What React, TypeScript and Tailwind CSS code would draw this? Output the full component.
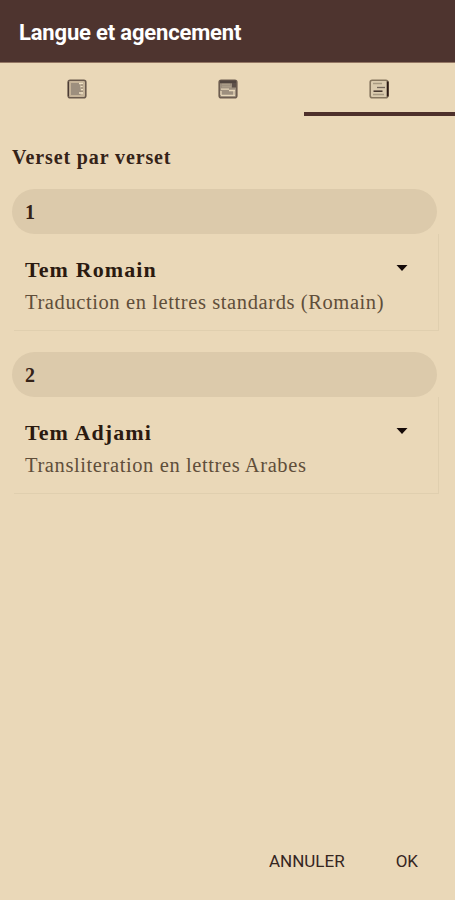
import type { ReactNode } from "react";

const entries = [
  {
    position: 1,
    title: "Tem Romain",
    description: "Traduction en lettres standards (Romain)",
  },
  {
    position: 2,
    title: "Tem Adjami",
    description: "Transliteration en lettres Arabes",
  },
];

function SinglePaneIcon() {
  return (
    <svg width="20" height="20" viewBox="0 0 20 20">
      <rect x="1.2" y="1.2" width="17.6" height="17.6" rx="2" fill="#c6b499" stroke="#6a5a4d" strokeWidth="1.6" />
      <path d="M1.5 3v14" stroke="#4b3b34" strokeWidth="1.2" />
      <path d="M4 4h9.5v12H4z" fill="#9d8f7e" />
      <path d="M12 4.5h4M13.5 7.5h2M14 10.5h2M12 14h4" stroke="#eee0c2" strokeWidth="1.4" />
      <path d="M14 6h2M14 9h2M13 12.2h3" stroke="#8b7c6b" />
    </svg>
  );
}

function TwoPaneIcon() {
  return (
    <svg width="20" height="20" viewBox="0 0 20 20">
      <rect x="1.2" y="1.2" width="17.6" height="17.6" rx="2" fill="#9d8f7e" stroke="#6d5d50" strokeWidth="1.6" />
      <path d="M2 1.5h16v2.8H2z" fill="#51453f" />
      <path d="M14 4h4v4.5h-4z" fill="#5d5049" />
      <path d="M4 5.5h8M4 7.8h9" stroke="#aa9c88" strokeWidth="1.4" />
      <path d="M3 10.2h8M11 11.5h6M3 12v4M16 12v4M3 16.3h14" stroke="#e8d8ba" strokeWidth="1.3" />
    </svg>
  );
}

function VerseByVerseIcon() {
  return (
    <svg width="20" height="20" viewBox="0 0 20 20">
      <rect x="1.2" y="1.2" width="17.6" height="17.6" rx="2" fill="#dbcbae" stroke="#86765f" strokeWidth="1.6" />
      <path d="M18.7 2.5v15" stroke="#2a1812" strokeWidth="2" />
      <path d="M4 4.5h9M4 15.5h11" stroke="#a89a82" strokeWidth="1.6" />
      <path d="M8 8.5h8" stroke="#74675a" strokeWidth="1.3" />
      <path d="M4.5 12.2h9" stroke="#42322a" strokeWidth="1.5" />
    </svg>
  );
}

function Tab({ children, active = false }: { children: ReactNode; active?: boolean }) {
  return (
    <button
      className={
        active
          ? "flex h-[53px] flex-1 items-start justify-center border-b-4 border-[#4e302b] pt-4"
          : "flex h-[53px] flex-1 items-start justify-center pt-4"
      }
    >
      {children}
    </button>
  );
}

function App() {
  return (
    <div className="flex h-[900px] w-[455px] flex-col bg-[#ead8b8] font-['Roboto',sans-serif]">
      <header className="flex h-[63px] shrink-0 items-center border-b border-[#947764] bg-[#4e342f] pb-px pl-[19px] pt-1">
        <h1 className="whitespace-nowrap text-[22px] font-bold tracking-[-0.17px] text-white">
          Langue et agencement
        </h1>
      </header>

      <nav className="flex pl-px">
        <Tab>
          <SinglePaneIcon />
        </Tab>
        <Tab>
          <TwoPaneIcon />
        </Tab>
        <Tab active>
          <VerseByVerseIcon />
        </Tab>
      </nav>

      <main className="flex-1 pl-3 pr-[18px] font-['Liberation_Serif',serif]">
        <h2 className="mt-7 h-[45px] whitespace-nowrap text-[20px] font-bold leading-[26px] tracking-[0.88px] text-[#352318]">
          Verset par verset
        </h2>
        {entries.map((entry) => (
          <section key={entry.position} className="h-[163px]">
            <div className="flex h-[45px] items-center rounded-full bg-[#dccaab] pl-[13px] text-[20px] font-bold text-[#352318]">
              {entry.position}
            </div>
            <div className="-mr-0.5 ml-0.5 h-[97px] border-b border-r border-[#e0cfaf] pl-[11px] pt-[22px]">
              <div className="flex items-start justify-between pr-[30px]">
                <h3 className="whitespace-nowrap text-[22px] font-bold leading-7 tracking-[1.1px] text-[#2b1a10]">
                  {entry.title}
                </h3>
                <svg className="mt-[9px]" width="12" height="6" viewBox="0 0 12 6">
                  <path d="M0.5 0h11L6 6z" fill="#150a08" />
                </svg>
              </div>
              <p className="mt-1 whitespace-nowrap text-[20.5px] leading-7 tracking-[0.6px] text-[#604e3a]">
                {entry.description}
              </p>
            </div>
          </section>
        ))}
      </main>

      <footer className="flex h-[78px] items-center justify-end gap-[51px] pr-[37px] pt-0.5 text-[17px] text-[#35251f]">
        <button>ANNULER</button>
        <button>OK</button>
      </footer>
    </div>
  );
}

export default App;
